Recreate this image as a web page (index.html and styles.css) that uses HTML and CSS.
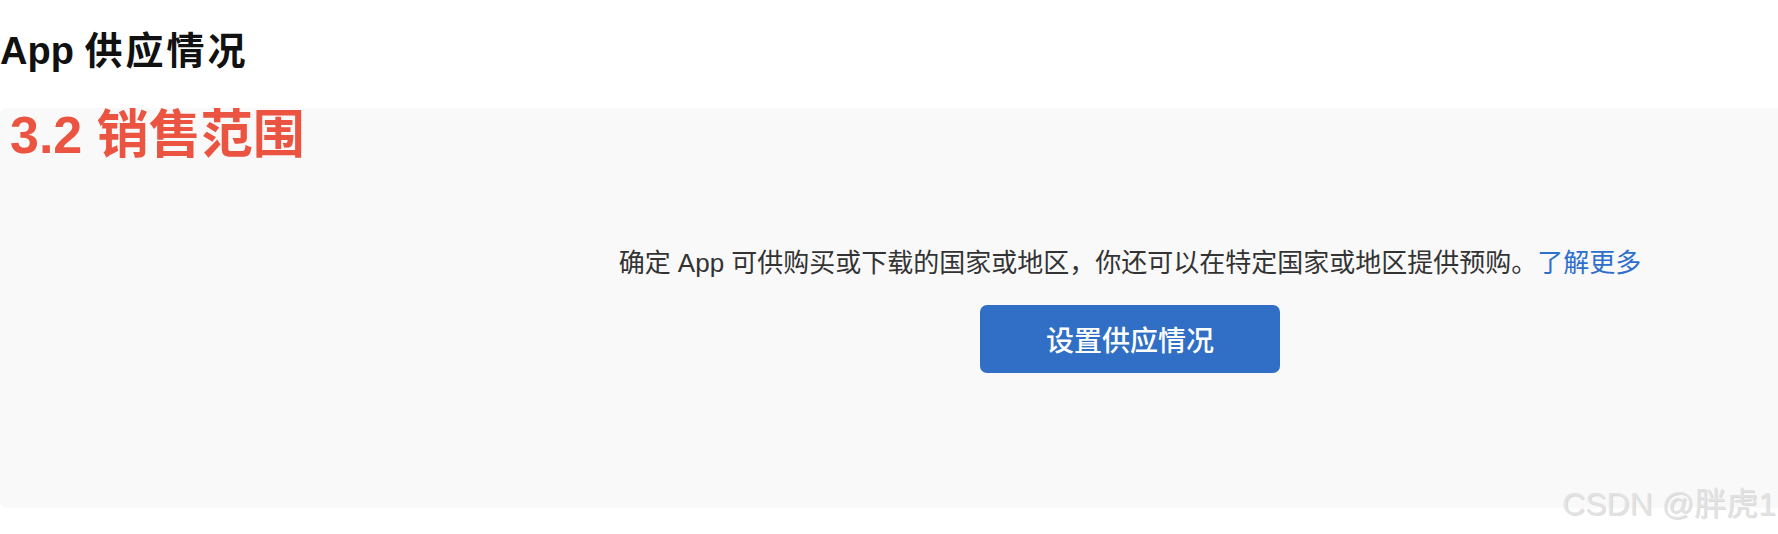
FILE: index.html
```html
<!DOCTYPE html>
<html lang="zh-CN">
<head>
  <meta charset="UTF-8" />
  <meta name="viewport" content="width=device-width, initial-scale=1.0"/>
  <title>App 供应情况</title>
  <link rel="stylesheet" href="styles.css">
</head>
<body>
  <h1 class="page-title">App <span class="title-cjk">供应情况</span></h1>

  <section class="panel">
    <h2 class="annotation">3.2 销售范围</h2>

    <div class="panel-content">
      <p class="description">
        确定 App 可供购买或下载的国家或地区，你还可以在特定国家或地区提供预购。<a href="#" class="link">了解更多</a>
      </p>
      <button class="primary-btn">设置供应情况</button>
    </div>
  </section>

  <div class="watermark">CSDN @胖虎1</div>
</body>
</html>
```

FILE: styles.css
```css
* {
  margin: 0; padding: 0; box-sizing: border-box;
}

body {
  position: relative;
  min-height: 100vh;
  background-color: #ffffff;
  color: #1d1d1f;
  font-family: "Liberation Sans", "Noto Sans CJK SC", sans-serif;
  overflow: hidden;
}

.page-title {
  padding-top: 29px;
  font-size: 38px;
  line-height: 44px;
  font-weight: 700;
  color: #111111;
}

.title-cjk {
  letter-spacing: 3px;
}

.panel {
  margin-top: 35px;
  background-color: #f9f9f9;
  border-radius: 8px 0 0 8px;
  padding: 1px 0 135px 0;
}

.annotation {
  padding-left: 10px;
  font-size: 52px;
  line-height: 52px;
  font-weight: 700;
  color: #eb5441;
}

.panel-content {
  display: flex;
  flex-direction: column;
  align-items: center;
  padding-left: 482px;
  margin-top: 85px;
}

.description {
  font-size: 26px;
  line-height: 34px;
  color: #333333;
  white-space: nowrap;
}

.link {
  color: #2e6fcc;
  text-decoration: none;
}

.primary-btn {
  margin-top: 25px;
  width: 300px;
  height: 68px;
  border: none;
  border-radius: 7px;
  background-color: #306fc5;
  color: #ffffff;
  font-family: "Liberation Sans", "Noto Sans CJK SC", sans-serif;
  font-size: 28px;
  font-weight: 500;
  cursor: pointer;
}

.watermark {
  position: absolute;
  right: 2px;
  bottom: 14px;
  font-size: 32px;
  line-height: 32px;
  color: #e2e2e2;
  text-shadow: 1px 1px 0 rgba(0, 0, 0, 0.14);
}
```
